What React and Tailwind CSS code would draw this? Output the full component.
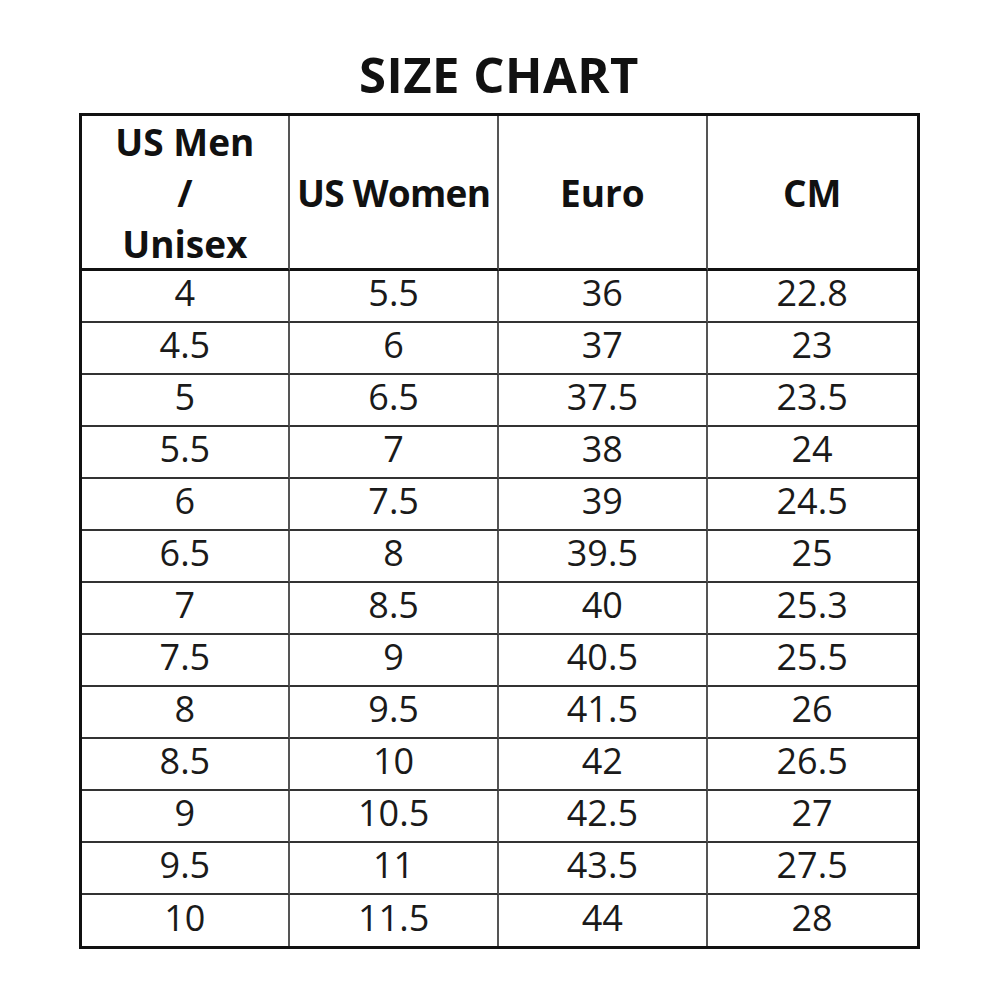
const rows = [
  ['4', '5.5', '36', '22.8'],
  ['4.5', '6', '37', '23'],
  ['5', '6.5', '37.5', '23.5'],
  ['5.5', '7', '38', '24'],
  ['6', '7.5', '39', '24.5'],
  ['6.5', '8', '39.5', '25'],
  ['7', '8.5', '40', '25.3'],
  ['7.5', '9', '40.5', '25.5'],
  ['8', '9.5', '41.5', '26'],
  ['8.5', '10', '42', '26.5'],
  ['9', '10.5', '42.5', '27'],
  ['9.5', '11', '43.5', '27.5'],
  ['10', '11.5', '44', '28'],
]

function HeadCell({ children, last }) {
  return (
    <div
      className={`flex h-[155px] items-center justify-center border-b-[3px] border-b-[#111] text-center text-[37px] font-bold leading-[51px] text-[#111] ${
        last ? '' : 'border-r-2 border-r-[#555]'
      }`}
    >
      {children}
    </div>
  )
}

export default function App() {
  return (
    <div className="flex h-[1002px] w-full flex-col items-center bg-white font-['Open_Sans',sans-serif]">
      <h1 className="mb-[9px] mt-[44px] h-[60px] text-[49px] font-bold leading-[60px] tracking-[0.01em] text-[#111]">
        SIZE CHART
      </h1>

      <div className="grid w-[841px] grid-cols-4 border-[3px] border-[#111]">
        <HeadCell>
          <div>
            US Men
            <br />/<br />
            Unisex
          </div>
        </HeadCell>
        <HeadCell>
          <span className="tracking-[-0.02em]">US Women</span>
        </HeadCell>
        <HeadCell>Euro</HeadCell>
        <HeadCell last>CM</HeadCell>

        {rows.map((row, i) =>
          row.map((value, j) => (
            <div
              key={`${i}-${j}`}
              className={`flex items-center justify-center text-[36px] leading-none text-[#1a1a1a] ${
                i === rows.length - 1 ? 'h-[51px]' : 'h-[52px] border-b-2 border-b-[#333]'
              } ${j < 3 ? 'border-r-2 border-r-[#555]' : ''}`}
            >
              <span className="-mt-[6px]">{value}</span>
            </div>
          ))
        )}
      </div>
    </div>
  )
}
